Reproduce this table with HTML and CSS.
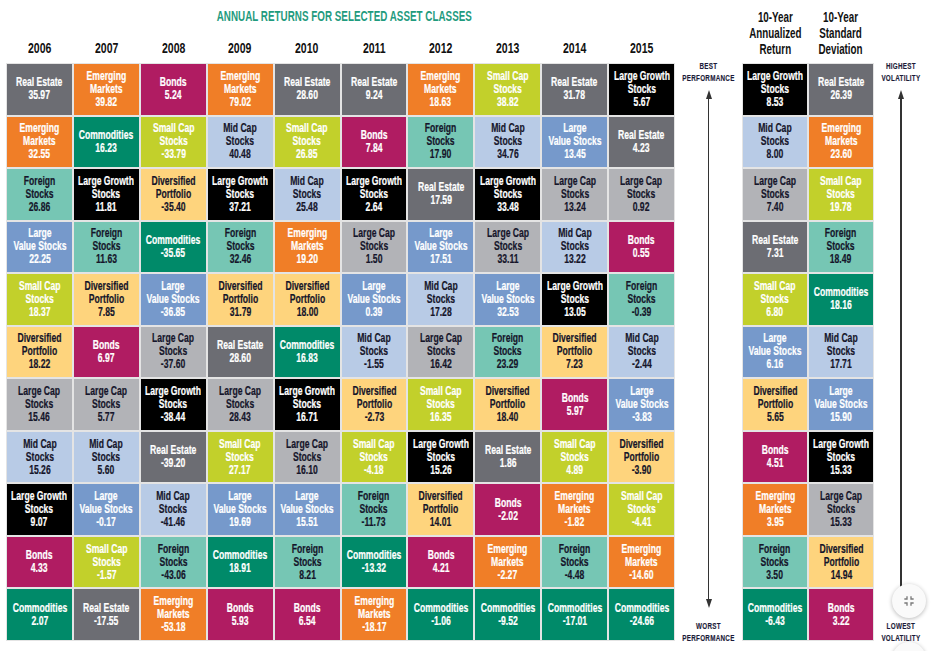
FILE: index.html
```html
<!DOCTYPE html>
<html lang="en">
<head>
<meta charset="utf-8">
<title>Annual Returns for Selected Asset Classes</title>
<link rel="stylesheet" href="styles.css">
</head>
<body>
<div class="page">
  <section class="main">
    <header class="main-head">
      <h1 class="title"><span>ANNUAL RETURNS FOR SELECTED ASSET CLASSES</span></h1>
      <div class="years">
        <span>2006</span><span>2007</span><span>2008</span><span>2009</span><span>2010</span>
        <span>2011</span><span>2012</span><span>2013</span><span>2014</span><span>2015</span>
      </div>
    </header>
    <div class="grid cols10">
      <div class="cell re"><span>Real Estate<br>35.97</span></div>
      <div class="cell em"><span>Emerging<br>Markets<br>39.82</span></div>
      <div class="cell bo"><span>Bonds<br>5.24</span></div>
      <div class="cell em"><span>Emerging<br>Markets<br>79.02</span></div>
      <div class="cell re"><span>Real Estate<br>28.60</span></div>
      <div class="cell re"><span>Real Estate<br>9.24</span></div>
      <div class="cell em"><span>Emerging<br>Markets<br>18.63</span></div>
      <div class="cell sc"><span>Small Cap<br>Stocks<br>38.82</span></div>
      <div class="cell re"><span>Real Estate<br>31.78</span></div>
      <div class="cell lg"><span>Large Growth<br>Stocks<br>5.67</span></div>

      <div class="cell em"><span>Emerging<br>Markets<br>32.55</span></div>
      <div class="cell co"><span>Commodities<br>16.23</span></div>
      <div class="cell sc"><span>Small Cap<br>Stocks<br>-33.79</span></div>
      <div class="cell mc"><span>Mid Cap<br>Stocks<br>40.48</span></div>
      <div class="cell sc"><span>Small Cap<br>Stocks<br>26.85</span></div>
      <div class="cell bo"><span>Bonds<br>7.84</span></div>
      <div class="cell fs"><span>Foreign<br>Stocks<br>17.90</span></div>
      <div class="cell mc"><span>Mid Cap<br>Stocks<br>34.76</span></div>
      <div class="cell lv"><span>Large<br>Value Stocks<br>13.45</span></div>
      <div class="cell re"><span>Real Estate<br>4.23</span></div>

      <div class="cell fs"><span>Foreign<br>Stocks<br>26.86</span></div>
      <div class="cell lg"><span>Large Growth<br>Stocks<br>11.81</span></div>
      <div class="cell dp"><span>Diversified<br>Portfolio<br>-35.40</span></div>
      <div class="cell lg"><span>Large Growth<br>Stocks<br>37.21</span></div>
      <div class="cell mc"><span>Mid Cap<br>Stocks<br>25.48</span></div>
      <div class="cell lg"><span>Large Growth<br>Stocks<br>2.64</span></div>
      <div class="cell re"><span>Real Estate<br>17.59</span></div>
      <div class="cell lg"><span>Large Growth<br>Stocks<br>33.48</span></div>
      <div class="cell lc"><span>Large Cap<br>Stocks<br>13.24</span></div>
      <div class="cell lc"><span>Large Cap<br>Stocks<br>0.92</span></div>

      <div class="cell lv"><span>Large<br>Value Stocks<br>22.25</span></div>
      <div class="cell fs"><span>Foreign<br>Stocks<br>11.63</span></div>
      <div class="cell co"><span>Commodities<br>-35.65</span></div>
      <div class="cell fs"><span>Foreign<br>Stocks<br>32.46</span></div>
      <div class="cell em"><span>Emerging<br>Markets<br>19.20</span></div>
      <div class="cell lc"><span>Large Cap<br>Stocks<br>1.50</span></div>
      <div class="cell lv"><span>Large<br>Value Stocks<br>17.51</span></div>
      <div class="cell lc"><span>Large Cap<br>Stocks<br>33.11</span></div>
      <div class="cell mc"><span>Mid Cap<br>Stocks<br>13.22</span></div>
      <div class="cell bo"><span>Bonds<br>0.55</span></div>

      <div class="cell sc"><span>Small Cap<br>Stocks<br>18.37</span></div>
      <div class="cell dp"><span>Diversified<br>Portfolio<br>7.85</span></div>
      <div class="cell lv"><span>Large<br>Value Stocks<br>-36.85</span></div>
      <div class="cell dp"><span>Diversified<br>Portfolio<br>31.79</span></div>
      <div class="cell dp"><span>Diversified<br>Portfolio<br>18.00</span></div>
      <div class="cell lv"><span>Large<br>Value Stocks<br>0.39</span></div>
      <div class="cell mc"><span>Mid Cap<br>Stocks<br>17.28</span></div>
      <div class="cell lv"><span>Large<br>Value Stocks<br>32.53</span></div>
      <div class="cell lg"><span>Large Growth<br>Stocks<br>13.05</span></div>
      <div class="cell fs"><span>Foreign<br>Stocks<br>-0.39</span></div>

      <div class="cell dp"><span>Diversified<br>Portfolio<br>18.22</span></div>
      <div class="cell bo"><span>Bonds<br>6.97</span></div>
      <div class="cell lc"><span>Large Cap<br>Stocks<br>-37.60</span></div>
      <div class="cell re"><span>Real Estate<br>28.60</span></div>
      <div class="cell co"><span>Commodities<br>16.83</span></div>
      <div class="cell mc"><span>Mid Cap<br>Stocks<br>-1.55</span></div>
      <div class="cell lc"><span>Large Cap<br>Stocks<br>16.42</span></div>
      <div class="cell fs"><span>Foreign<br>Stocks<br>23.29</span></div>
      <div class="cell dp"><span>Diversified<br>Portfolio<br>7.23</span></div>
      <div class="cell mc"><span>Mid Cap<br>Stocks<br>-2.44</span></div>

      <div class="cell lc"><span>Large Cap<br>Stocks<br>15.46</span></div>
      <div class="cell lc"><span>Large Cap<br>Stocks<br>5.77</span></div>
      <div class="cell lg"><span>Large Growth<br>Stocks<br>-38.44</span></div>
      <div class="cell lc"><span>Large Cap<br>Stocks<br>28.43</span></div>
      <div class="cell lg"><span>Large Growth<br>Stocks<br>16.71</span></div>
      <div class="cell dp"><span>Diversified<br>Portfolio<br>-2.73</span></div>
      <div class="cell sc"><span>Small Cap<br>Stocks<br>16.35</span></div>
      <div class="cell dp"><span>Diversified<br>Portfolio<br>18.40</span></div>
      <div class="cell bo"><span>Bonds<br>5.97</span></div>
      <div class="cell lv"><span>Large<br>Value Stocks<br>-3.83</span></div>

      <div class="cell mc"><span>Mid Cap<br>Stocks<br>15.26</span></div>
      <div class="cell mc"><span>Mid Cap<br>Stocks<br>5.60</span></div>
      <div class="cell re"><span>Real Estate<br>-39.20</span></div>
      <div class="cell sc"><span>Small Cap<br>Stocks<br>27.17</span></div>
      <div class="cell lc"><span>Large Cap<br>Stocks<br>16.10</span></div>
      <div class="cell sc"><span>Small Cap<br>Stocks<br>-4.18</span></div>
      <div class="cell lg"><span>Large Growth<br>Stocks<br>15.26</span></div>
      <div class="cell re"><span>Real Estate<br>1.86</span></div>
      <div class="cell sc"><span>Small Cap<br>Stocks<br>4.89</span></div>
      <div class="cell dp"><span>Diversified<br>Portfolio<br>-3.90</span></div>

      <div class="cell lg"><span>Large Growth<br>Stocks<br>9.07</span></div>
      <div class="cell lv"><span>Large<br>Value Stocks<br>-0.17</span></div>
      <div class="cell mc"><span>Mid Cap<br>Stocks<br>-41.46</span></div>
      <div class="cell lv"><span>Large<br>Value Stocks<br>19.69</span></div>
      <div class="cell lv"><span>Large<br>Value Stocks<br>15.51</span></div>
      <div class="cell fs"><span>Foreign<br>Stocks<br>-11.73</span></div>
      <div class="cell dp"><span>Diversified<br>Portfolio<br>14.01</span></div>
      <div class="cell bo"><span>Bonds<br>-2.02</span></div>
      <div class="cell em"><span>Emerging<br>Markets<br>-1.82</span></div>
      <div class="cell sc"><span>Small Cap<br>Stocks<br>-4.41</span></div>

      <div class="cell bo"><span>Bonds<br>4.33</span></div>
      <div class="cell sc"><span>Small Cap<br>Stocks<br>-1.57</span></div>
      <div class="cell fs"><span>Foreign<br>Stocks<br>-43.06</span></div>
      <div class="cell co"><span>Commodities<br>18.91</span></div>
      <div class="cell fs"><span>Foreign<br>Stocks<br>8.21</span></div>
      <div class="cell co"><span>Commodities<br>-13.32</span></div>
      <div class="cell bo"><span>Bonds<br>4.21</span></div>
      <div class="cell em"><span>Emerging<br>Markets<br>-2.27</span></div>
      <div class="cell fs"><span>Foreign<br>Stocks<br>-4.48</span></div>
      <div class="cell em"><span>Emerging<br>Markets<br>-14.60</span></div>

      <div class="cell co"><span>Commodities<br>2.07</span></div>
      <div class="cell re"><span>Real Estate<br>-17.55</span></div>
      <div class="cell em"><span>Emerging<br>Markets<br>-53.18</span></div>
      <div class="cell bo"><span>Bonds<br>5.93</span></div>
      <div class="cell bo"><span>Bonds<br>6.54</span></div>
      <div class="cell em"><span>Emerging<br>Markets<br>-18.17</span></div>
      <div class="cell co"><span>Commodities<br>-1.06</span></div>
      <div class="cell co"><span>Commodities<br>-9.52</span></div>
      <div class="cell co"><span>Commodities<br>-17.01</span></div>
      <div class="cell co"><span>Commodities<br>-24.66</span></div>
    </div>
  </section>

  <aside class="scale perf">
    <div class="lbl"><span>BEST<br>PERFORMANCE</span></div>
    <div class="arrow"><span class="head up"></span><span class="shaft"></span><span class="head down"></span></div>
    <div class="lbl"><span>WORST<br>PERFORMANCE</span></div>
  </aside>

  <section class="side">
    <header class="side-head">
      <div><span>10-Year<br>Annualized<br>Return</span></div>
      <div><span>10-Year<br>Standard<br>Deviation</span></div>
    </header>
    <div class="grid cols2">
      <div class="cell lg"><span>Large Growth<br>Stocks<br>8.53</span></div>
      <div class="cell re"><span>Real Estate<br>26.39</span></div>
      <div class="cell mc"><span>Mid Cap<br>Stocks<br>8.00</span></div>
      <div class="cell em"><span>Emerging<br>Markets<br>23.60</span></div>
      <div class="cell lc"><span>Large Cap<br>Stocks<br>7.40</span></div>
      <div class="cell sc"><span>Small Cap<br>Stocks<br>19.78</span></div>
      <div class="cell re"><span>Real Estate<br>7.31</span></div>
      <div class="cell fs"><span>Foreign<br>Stocks<br>18.49</span></div>
      <div class="cell sc"><span>Small Cap<br>Stocks<br>6.80</span></div>
      <div class="cell co"><span>Commodities<br>18.16</span></div>
      <div class="cell lv"><span>Large<br>Value Stocks<br>6.16</span></div>
      <div class="cell mc"><span>Mid Cap<br>Stocks<br>17.71</span></div>
      <div class="cell dp"><span>Diversified<br>Portfolio<br>5.65</span></div>
      <div class="cell lv"><span>Large<br>Value Stocks<br>15.90</span></div>
      <div class="cell bo"><span>Bonds<br>4.51</span></div>
      <div class="cell lg"><span>Large Growth<br>Stocks<br>15.33</span></div>
      <div class="cell em"><span>Emerging<br>Markets<br>3.95</span></div>
      <div class="cell lc"><span>Large Cap<br>Stocks<br>15.33</span></div>
      <div class="cell fs"><span>Foreign<br>Stocks<br>3.50</span></div>
      <div class="cell dp"><span>Diversified<br>Portfolio<br>14.94</span></div>
      <div class="cell co"><span>Commodities<br>-6.43</span></div>
      <div class="cell bo"><span>Bonds<br>3.22</span></div>
    </div>
  </section>

  <aside class="scale vol">
    <div class="lbl"><span>HIGHEST<br>VOLATILITY</span></div>
    <div class="arrow"><span class="head up"></span><span class="shaft"></span><span class="head down"></span></div>
    <div class="lbl"><span>LOWEST<br>VOLATILITY</span></div>
  </aside>
</div>

<button class="fab fab-exit" type="button" aria-label="Exit full screen">
  <svg viewBox="0 0 24 24" width="16" height="16"><path d="M5 16h3v3h2v-5H5v2zm3-8H5v2h5V5H8v3zm6 11h2v-3h3v-2h-5v5zm2-11V5h-2v5h5V8h-3z"/></svg>
</button>
<button class="fab fab-next" type="button" aria-label="More"></button>
</body>
</html>
```

FILE: styles.css
```css
html, body {
  margin: 0;
  padding: 0;
  background: #ffffff;
}

body {
  font-family: "Liberation Sans", Arial, sans-serif;
  overflow: hidden;
}

.page {
  display: flex;
  height: 651px;
  padding-left: 6px;
  box-sizing: border-box;
}

/* condensed text: the face is narrowed around its centre */
.title span,
.years span,
.cell span,
.side-head span,
.lbl span {
  display: inline-block;
  white-space: nowrap;
  transform: scaleX(0.7);
}

/* main 10-year block */
.main {
  width: 669px;
  display: flex;
  flex-direction: column;
}

.main-head {
  height: 63px;
  display: flex;
  flex-direction: column;
}

.title {
  margin: 0;
  height: 32px;
  display: flex;
  align-items: center;
  justify-content: center;
  padding-left: 7px;
  color: #1f9b7e;
  font-size: 14px;
  font-weight: 700;
  letter-spacing: 0.05px;
}

.years {
  flex: 1;
  display: grid;
  grid-template-columns: repeat(10, minmax(0, 1fr));
  align-items: center;
  justify-items: center;
  font-size: 15px;
  font-weight: 700;
  color: #111;
}

.grid {
  display: grid;
  grid-template-rows: repeat(11, minmax(0, 1fr));
  gap: 2px;
  padding: 1px;
  background: #e4e4e4;
  height: 578px;
  box-sizing: border-box;
}

.cols10 { grid-template-columns: repeat(10, minmax(0, 1fr)); }
.cols2  { grid-template-columns: repeat(2, minmax(0, 1fr)); }

.cell {
  display: flex;
  align-items: center;
  justify-content: center;
  text-align: center;
  font-size: 12.3px;
  line-height: 13px;
  font-weight: 700;
  color: #ffffff;
  min-width: 0;
  -webkit-text-stroke: 0.2px currentColor;
}

.re { background: #6c6d73; }
.em { background: #f07e27; }
.bo { background: #b01c62; }
.sc { background: #c2d02b; }
.co { background: #008a69; }
.mc { background: #b8cbe6; color: #15152a; }
.fs { background: #76c6b4; color: #15152a; }
.lg { background: #000000; }
.dp { background: #fed47d; color: #15152a; }
.lv { background: #7699cb; }
.lc { background: #b2b3b7; color: #15152a; }

/* side arrows */
.scale {
  display: flex;
  flex-direction: column;
  align-items: center;
  padding: 61px 0 7px;
  box-sizing: border-box;
}

.perf { width: 67px; }
.vol  { width: 54px; }

.lbl {
  font-size: 9px;
  line-height: 11.5px;
  font-weight: 700;
  letter-spacing: 0.4px;
  text-align: center;
  color: #1b1b38;
  -webkit-text-stroke: 0.15px currentColor;
}

.arrow {
  flex: 1;
  display: flex;
  flex-direction: column;
  align-items: center;
  margin: 6px 0 13px;
}

.shaft {
  flex: 1;
  width: 1.5px;
  background: #333333;
}

.head {
  width: 0;
  height: 0;
  border-left: 3.5px solid transparent;
  border-right: 3.5px solid transparent;
}

.head.up { border-bottom: 9px solid #333333; }
.head.down { border-top: 9px solid #333333; }

/* 10-year block */
.side {
  width: 132px;
  display: flex;
  flex-direction: column;
}

.side-head {
  height: 63px;
  display: grid;
  grid-template-columns: repeat(2, minmax(0, 1fr));
  justify-items: center;
  align-items: start;
  padding-top: 9px;
  box-sizing: border-box;
  text-align: center;
  font-size: 14px;
  line-height: 16px;
  font-weight: 700;
  color: #111;
}

/* floating buttons */
.fab {
  position: fixed;
  left: 892px;
  width: 34px;
  height: 34px;
  border: 0;
  padding: 0;
  border-radius: 50%;
  background: #fafafa;
  box-shadow: 0 1px 4px rgba(0, 0, 0, 0.28);
  display: flex;
  align-items: center;
  justify-content: center;
}

.fab-exit { top: 584px; }
.fab-exit svg { fill: #7a7a7a; }

.fab-next { top: 642px; }
```
